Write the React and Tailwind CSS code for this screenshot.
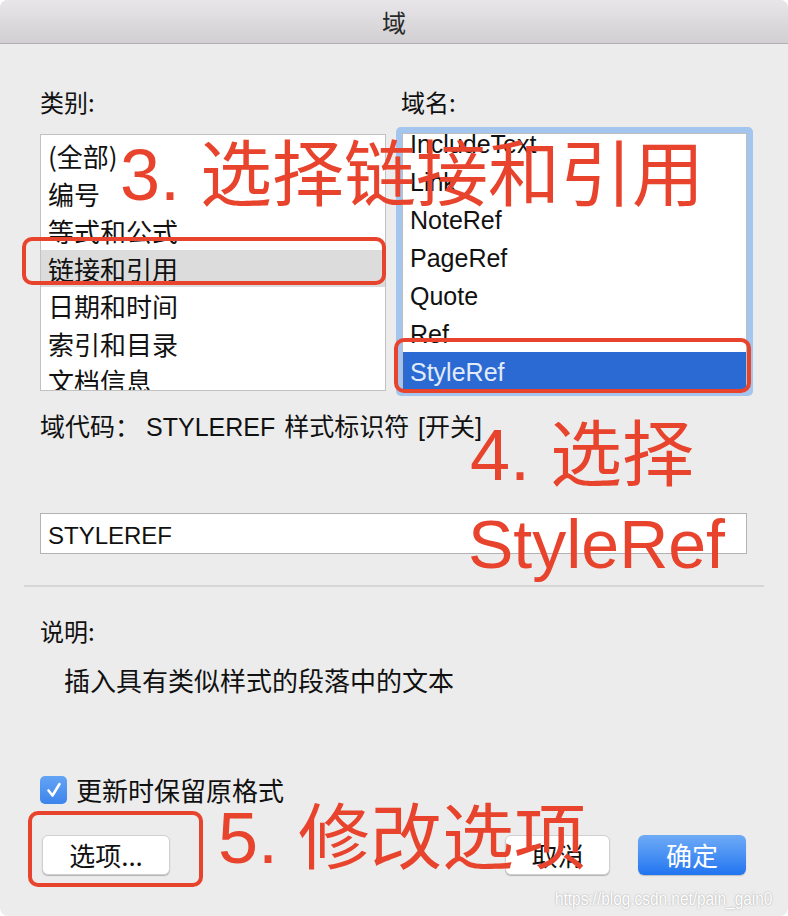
import React from 'react';

const categories = ['(全部)', '编号', '等式和公式', '链接和引用', '日期和时间', '索引和目录', '文档信息'];
const fieldNames = ['IncludeText', 'Link', 'NoteRef', 'PageRef', 'Quote', 'Ref', 'StyleRef'];

const cjk = { fontFamily: '"Noto Sans CJK SC", sans-serif' };
const mixed = { fontFamily: '"Liberation Sans", "Noto Sans CJK SC", sans-serif' };

function Annotations() {
    return (
        <>
            <div className="absolute left-[22px] top-[237px] w-[364px] h-[48px] border-4 border-[#e8432c] rounded-[10px]"></div>
            <div className="absolute left-[394px] top-[338px] w-[357px] h-[55px] border-4 border-[#e8432c] rounded-[10px]"></div>
            <div className="absolute left-[28px] top-[811px] w-[175px] h-[76px] border-4 border-[#e8432c] rounded-[10px]"></div>

            <div className="absolute left-[120px] top-[139px] text-[72px] leading-none text-[#e8432c] whitespace-nowrap" style={mixed}>
                3. 选择链接和引用
            </div>
            <div className="absolute left-[470px] top-[419px] text-[72px] leading-none text-[#e8432c] whitespace-nowrap" style={mixed}>
                4. 选择
            </div>
            <div className="absolute left-[468px] top-[510px] text-[68px] leading-none text-[#e8432c] whitespace-nowrap" style={mixed}>
                StyleRef
            </div>
            <div className="absolute left-[218px] top-[802px] text-[72px] leading-none text-[#e8432c] whitespace-nowrap" style={mixed}>
                5. 修改选项
            </div>

            <div
                className="absolute right-[16px] bottom-[8px] origin-right scale-x-[0.81] text-[19px] leading-none text-white whitespace-nowrap"
                style={{ fontFamily: '"Liberation Sans", sans-serif', textShadow: '0 0 2px #9a9a9a' }}
            >
                https://blog.csdn.net/pain_gain0
            </div>
        </>
    );
}

export default function App() {
    return (
        <div className="w-[788px] h-[916px] bg-white">
            <div className="relative w-[788px] h-[916px] bg-[#ececec] rounded-[8px] overflow-hidden text-[#111]" style={cjk}>
                <div className="h-[44px] flex items-center justify-center bg-gradient-to-b from-[#e8e6e8] to-[#d1cfd1] border-b border-[#b1b1b1]">
                    <span className="text-[24px] leading-none text-[#2a2a2a]">域</span>
                </div>

                <div className="pl-[40px]">
                    <div className="mt-[46px] flex text-[24px] leading-[24px]">
                        <div className="w-[361px]">类别:</div>
                        <div>域名:</div>
                    </div>

                    <div className="mt-[13px] flex items-start gap-[10px]">
                        <div className="mt-[7px] w-[346px] h-[257px] bg-white border border-[#c2c2c2] overflow-hidden">
                            <div className="pt-[2px]">
                                {categories.map((c) => (
                                    <div
                                        key={c}
                                        className={`h-[37.5px] flex items-center pl-[7px] text-[26px] ${c === '链接和引用' ? 'bg-[#dcdcdc]' : ''}`}
                                    >
                                        {c}
                                    </div>
                                ))}
                            </div>
                        </div>
                        <div className="w-[357px] p-[6px] bg-[#a3c5ee] rounded-[5px]">
                            <div className="h-[257px] bg-white border border-[#bdbdbd] overflow-hidden" style={mixed}>
                                <div className="-mt-[10px]">
                                    {fieldNames.map((f) => (
                                        <div
                                            key={f}
                                            className={`h-[38px] flex items-center pt-[3px] pl-[7px] text-[25px] ${f === 'StyleRef' ? 'bg-[#2a6ad2] text-[#e2ebfa]' : ''}`}
                                        >
                                            {f}
                                        </div>
                                    ))}
                                </div>
                            </div>
                        </div>
                    </div>

                    <div className="mt-[19px] flex text-[25px] leading-[24px] whitespace-nowrap" style={mixed}>
                        <span>域代码：</span>
                        <span className="ml-[6px] [word-spacing:2px]">STYLEREF 样式标识符 [开关]</span>
                    </div>

                    <div className="mt-[74px] w-[707px] h-[41px] bg-white border border-[#b3b3b3] flex items-center pt-[5px] pl-[7px] text-[24px]" style={mixed}>
                        STYLEREF
                    </div>

                    <div className="mt-[31px] -ml-[16px] w-[740px] h-[2px] bg-[#d6d6d6]"></div>

                    <div className="mt-[32px] text-[24px] leading-[24px]">说明:</div>

                    <div className="mt-[24px] pl-[24px] text-[26px] leading-[26px]">
                        插入具有类似样式的段落中的文本
                    </div>

                    <div className="mt-[83px] flex items-center gap-[9px]">
                        <div className="w-[27px] h-[28px] rounded-[5px] bg-gradient-to-b from-[#64a4f4] to-[#3d84ec] flex items-center justify-center">
                            <svg width="18" height="18" viewBox="0 0 18 18" fill="none">
                                <path d="M3.5 9.5 L7.5 14.5 L14.5 3" stroke="white" strokeWidth="2.6" strokeLinecap="round" strokeLinejoin="round" />
                            </svg>
                        </div>
                        <span className="text-[26px] leading-[28px]">更新时保留原格式</span>
                    </div>

                    <div className="mt-[31px] flex items-center">
                        <button className="ml-[2px] w-[128px] h-[40px] bg-white rounded-[6px] border border-[#d0d0d0] shadow-[0_1px_1px_rgba(0,0,0,0.25)] text-[26px] leading-none">
                            选项...
                        </button>
                        <button className="ml-[335px] w-[105px] h-[40px] bg-white rounded-[6px] border border-[#d0d0d0] shadow-[0_1px_1px_rgba(0,0,0,0.25)] text-[26px] leading-none">
                            取消
                        </button>
                        <button className="ml-[28px] w-[108px] h-[40px] rounded-[6px] bg-gradient-to-b from-[#6eabf6] to-[#1f74f0] text-white shadow-[0_1px_1px_rgba(0,0,0,0.2)] text-[26px] leading-none">
                            确定
                        </button>
                    </div>
                </div>

                <Annotations />
            </div>
        </div>
    );
}
